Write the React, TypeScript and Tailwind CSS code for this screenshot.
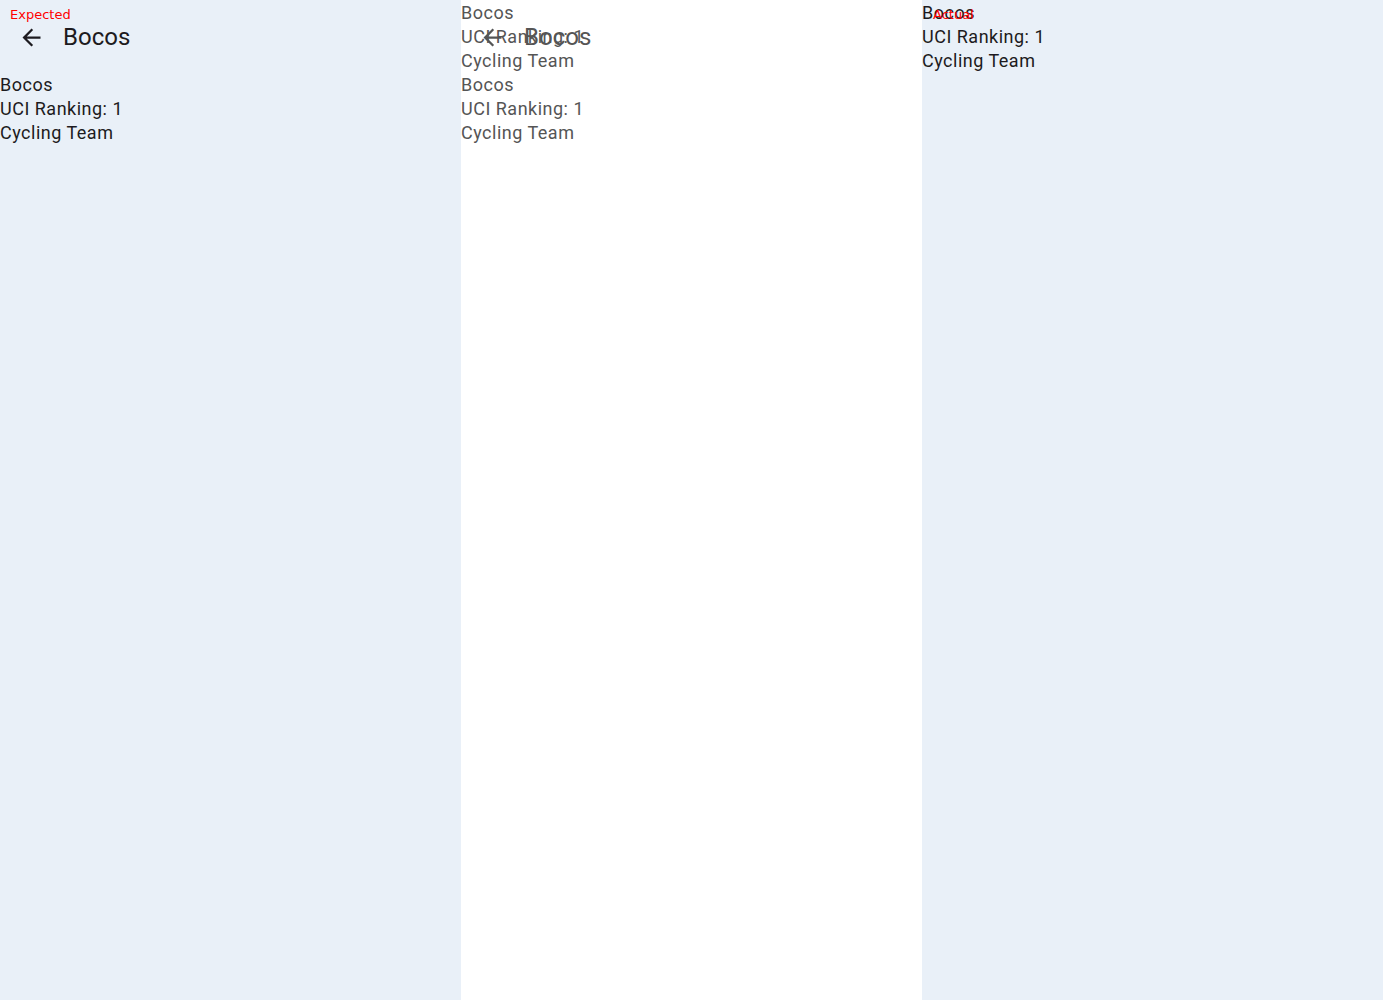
import React from 'react';

const ArrowBack = ({ className }: { className?: string }) => (
  <svg viewBox="0 0 24 24" className={className} fill="currentColor">
    <path d="M20 11H7.83l5.59-5.59L12 4l-8 8 8 8 1.41-1.41L7.83 13H20v-2z" />
  </svg>
);

const TeamInfo = ({ tone = 'text-[#1d1b20]' }: { tone?: string }) => (
  <div className={`flex flex-col pt-[1px] text-[18px] leading-6 tracking-[0.5px] ${tone}`}>
    <span>Bocos</span>
    <span>UCI Ranking: 1</span>
    <span>Cycling Team</span>
  </div>
);

const Header = ({ tone = 'text-[#1d1b20]' }: { tone?: string }) => (
  <div className={`flex h-[72px] items-center pt-[2px] ${tone}`}>
    <div className="flex w-[63px] justify-start pl-[18px]">
      <ArrowBack className="h-[27px] w-[27px]" />
    </div>
    <span className="text-[24px] leading-8">Bocos</span>
  </div>
);

const Label = ({ text, className }: { text: string; className: string }) => (
  <span
    className={`absolute text-[13px] leading-4 text-[#ff0000] ${className}`}
    style={{ fontFamily: '"DejaVu Sans", sans-serif' }}
  >
    {text}
  </span>
);

export default function App() {
  return (
    <div
      className="flex h-[1000px] w-[1383px] overflow-hidden"
      style={{ fontFamily: 'Roboto, "Noto Sans", sans-serif' }}
    >
      {/* expected */}
      <div className="relative flex h-full w-[461px] flex-col bg-[#e9f0f8]">
        <Header />
        <TeamInfo />
        <Label text="Expected" className="left-[10px] top-[7px]" />
      </div>

      {/* diff */}
      <div className="relative flex h-full w-[461px] flex-col bg-white">
        <Header tone="text-[#555]" />
        <TeamInfo tone="text-[#555]" />
        <div className="absolute left-0 top-0">
          <TeamInfo tone="text-[#555]" />
        </div>
      </div>

      {/* actual */}
      <div className="relative flex h-full w-[461px] flex-col bg-[#e9f0f8]">
        <TeamInfo />
        <Label text="Actual" className="left-[11px] top-[7px]" />
      </div>
    </div>
  );
}
